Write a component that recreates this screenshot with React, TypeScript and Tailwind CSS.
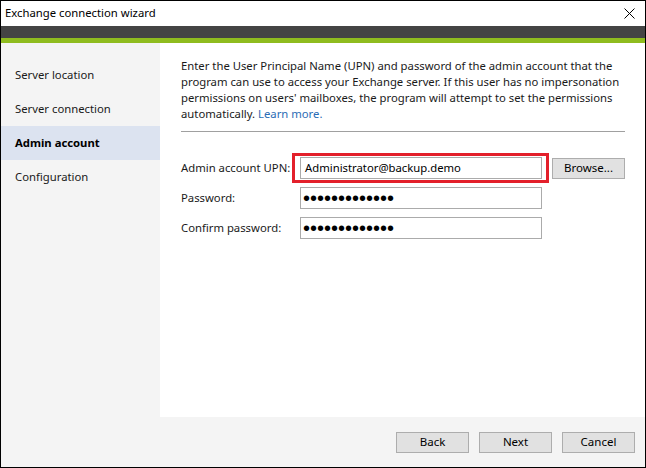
import React from 'react';

const steps = ['Server location', 'Server connection', 'Admin account', 'Configuration'];

const Dots = () => (
  <span className="font-['Liberation_Sans',sans-serif] text-[20px] leading-none text-black">
    •••••••••••••
  </span>
);

const Btn: React.FC<{ label: string }> = ({ label }) => (
  <button className="w-[73px] h-[21px] bg-[#e1e1e1] border border-[#adadad] text-[11.5px] text-black leading-none flex items-center justify-center">
    {label}
  </button>
);

export default function App() {
  return (
    <div className="w-[646px] h-[468px] border border-black flex flex-col bg-white text-[11.3px] text-[#1a1a1a] font-['Segoe_UI','Noto_Sans',sans-serif]">
      {/* title bar */}
      <div className="h-[25px] flex items-center justify-between pl-[4px] pr-[10px] shrink-0">
        <span className="text-black">Exchange connection wizard</span>
        <svg width="11" height="11" viewBox="0 0 11 11">
          <path d="M0.5 0.5 L10.5 10.5 M10.5 0.5 L0.5 10.5" stroke="#000" strokeWidth="1" />
        </svg>
      </div>
      <div className="h-[12px] bg-[#444444] shrink-0" />
      <div className="h-[5px] bg-[#8fbc1f] shrink-0" />

      <div className="flex-1 flex min-h-0">
        {/* sidebar */}
        <div className="w-[159px] shrink-0 bg-[#f4f4f4] pt-[15px] flex flex-col">
          {steps.map((s) => (
            <div
              key={s}
              className={`h-[34px] flex items-center pl-[14px] pt-[1px] ${
                s === 'Admin account' ? 'bg-[#dce3f0] font-bold text-black' : ''
              }`}
            >
              {s}
            </div>
          ))}
        </div>

        {/* main */}
        <div className="flex-1 min-w-0 pl-[21px] pr-[20px] pt-[15px] flex flex-col">
          <div className="leading-[16px] whitespace-nowrap">
            <div>Enter the User Principal Name (UPN) and password of the admin account that the</div>
            <div>program can use to access your Exchange server. If this user has no impersonation</div>
            <div>permissions on users' mailboxes, the program will attempt to set the permissions</div>
            <div>
              automatically. <span className="text-[#2b6cb5]">Learn more.</span>
            </div>
          </div>
          <div className="mt-[9px] h-px bg-[#a0a0a0]" />

          <div className="mt-[21px] flex flex-col whitespace-nowrap">
            <div className="h-[30px] flex items-center">
              <span className="w-[111px] shrink-0">Admin account UPN:</span>
              <div className="border-[3px] border-[#e3202b] pt-[1px] pb-[1px] pl-[5px] pr-[4px]">
                <div className="w-[242px] h-[22px] border border-[#ababab] bg-white flex items-center pl-[4px] text-black">
                  Administrator@backup.demo
                </div>
              </div>
              <div className="ml-[3px]">
                <Btn label="Browse..." />
              </div>
            </div>
            <div className="h-[30px] flex items-center">
              <span className="w-[119px] shrink-0">Password:</span>
              <div className="w-[242px] h-[22px] border border-[#ababab] bg-white flex items-center pl-[2px]">
                <Dots />
              </div>
            </div>
            <div className="h-[30px] flex items-center">
              <span className="w-[119px] shrink-0">Confirm password:</span>
              <div className="w-[242px] h-[22px] border border-[#ababab] bg-white flex items-center pl-[2px]">
                <Dots />
              </div>
            </div>
          </div>
        </div>
      </div>

      {/* footer */}
      <div className="h-[50px] bg-[#f4f4f4] shrink-0 flex items-center justify-end gap-[10px] pr-[10px]">
        <Btn label="Back" />
        <Btn label="Next" />
        <Btn label="Cancel" />
      </div>
    </div>
  );
}
